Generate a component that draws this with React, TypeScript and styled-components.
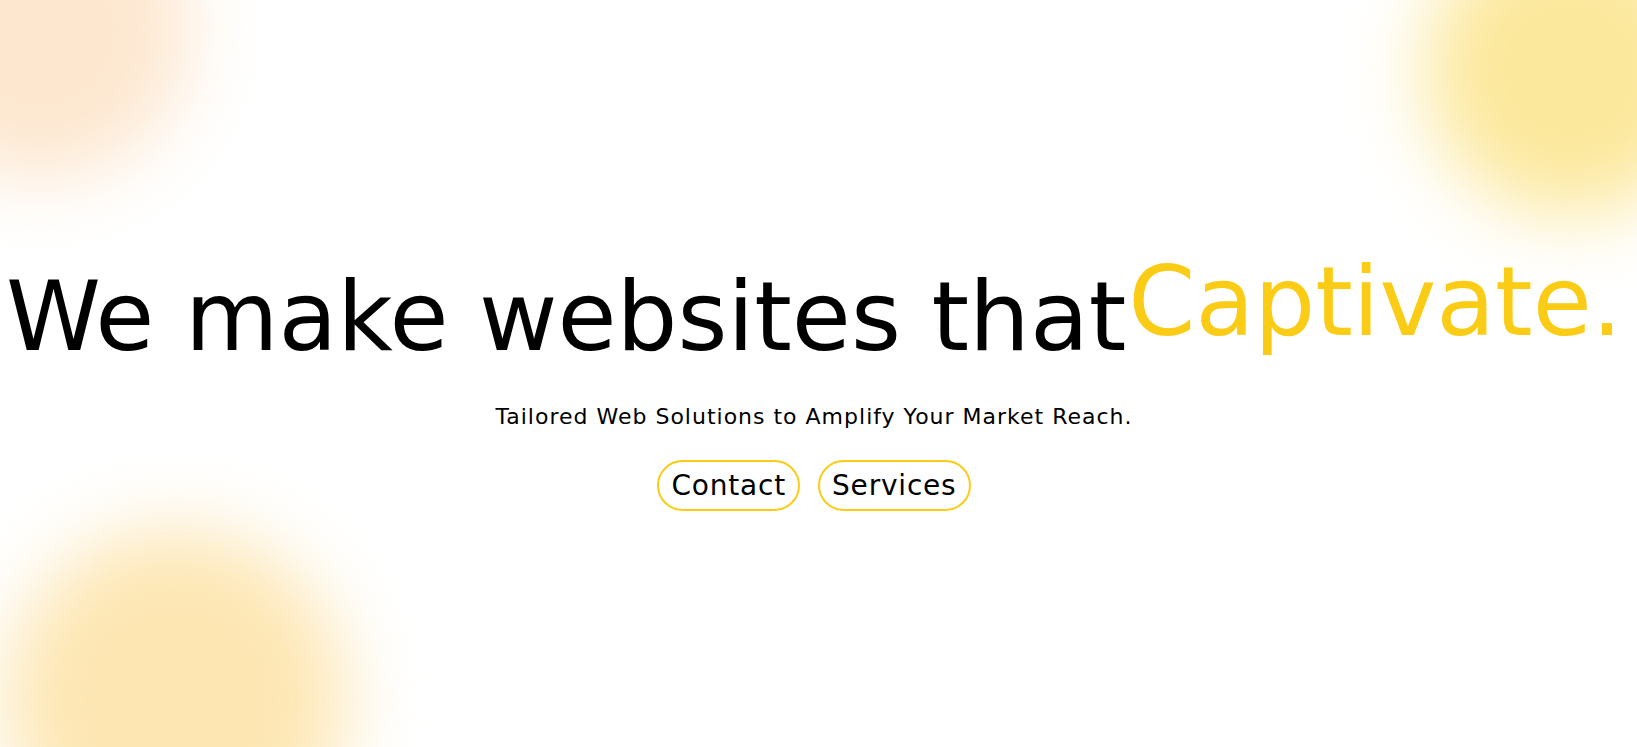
import React from "react"
import styled, { createGlobalStyle } from "styled-components"

const colors = {
	black: "#000000",
	yellow: "#facc15",
	peach: "#fde7cf",
	butter: "#fce89c",
	cream: "#fde6b2",
}

const GlobalStyle = createGlobalStyle`
	html, body {
		margin: 0;
		padding: 0;
		background: #ffffff;
	}

	body {
		font-family: "DejaVu Sans", "Open Sans", sans-serif;
		color: ${colors.black};
	}
`

const Hero = styled.section`
	position: relative;
	overflow: hidden;
	box-sizing: border-box;
	height: 747px;
	padding: 254px 9px 0 0;
	display: flex;
	flex-direction: column;
	align-items: center;
`

const Blob = styled.div<{ $color: string; $size: number; $top: number; $left: number }>`
	position: absolute;
	top: ${(p) => p.$top}px;
	left: ${(p) => p.$left}px;
	width: ${(p) => p.$size}px;
	height: ${(p) => p.$size}px;
	border-radius: 50%;
	background: ${(p) => p.$color};
	filter: blur(38px);
	pointer-events: none;
`

const Headline = styled.h1`
	position: relative;
	align-self: flex-start;
	margin: 0 0 0 6px;
	display: flex;
	align-items: flex-end;
	font-size: 96px;
	font-weight: 400;
	line-height: 1;
	white-space: nowrap;
`

const Plain = styled.span`
	color: ${colors.black};
`

const Accent = styled.span`
	color: ${colors.yellow};
	margin-left: 2px;
	margin-bottom: 15px;
`

const Tagline = styled.p`
	position: relative;
	margin: 39px 0 0;
	font-size: 22px;
	line-height: 1.2;
	letter-spacing: 1px;
`

const Actions = styled.div`
	position: relative;
	display: flex;
	gap: 18px;
	margin-top: 30px;
`

const Pill = styled.a`
	box-sizing: border-box;
	height: 51px;
	display: inline-flex;
	align-items: center;
	padding: 0 12px;
	border: 2px solid ${colors.yellow};
	border-radius: 999px;
	font-size: 28px;
	letter-spacing: 0.8px;
	color: ${colors.black};
	text-decoration: none;
`

const App = () => (
	<>
		<GlobalStyle />
		<Hero>
			<Blob $color={colors.peach} $size={300} $top={-120} $left={-110} />
			<Blob $color={colors.butter} $size={290} $top={-75} $left={1425} />
			<Blob $color={colors.cream} $size={340} $top={530} $left={5} />

			<Headline>
				<Plain>We make websites that</Plain>
				<Accent>Captivate.</Accent>
			</Headline>

			<Tagline>Tailored Web Solutions to Amplify Your Market Reach.</Tagline>

			<Actions>
				<Pill href="#contact">Contact</Pill>
				<Pill href="#services">Services</Pill>
			</Actions>
		</Hero>
	</>
)

export default App
